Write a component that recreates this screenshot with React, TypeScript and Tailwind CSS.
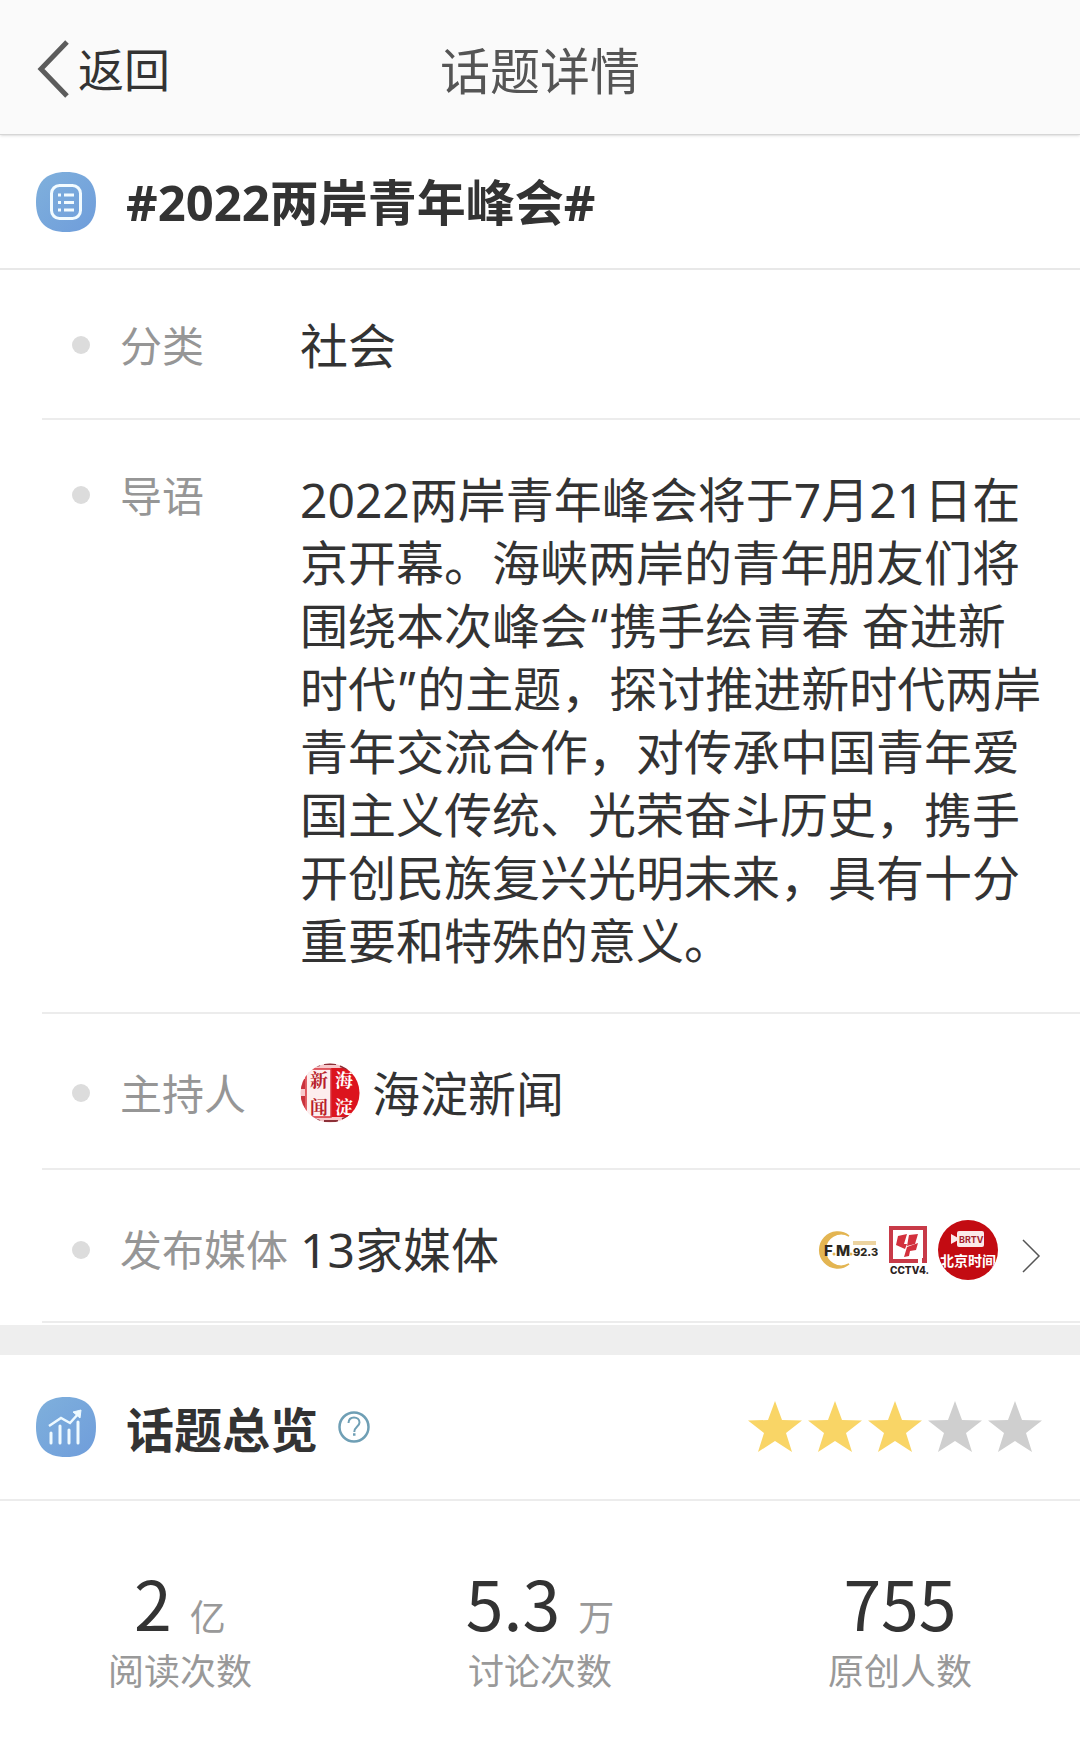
import type { ReactNode } from "react";

const CJK = "font-['Noto_Sans_CJK_SC',sans-serif]";

function BackChevron() {
  return (
    <svg viewBox="0 0 34 58" className="h-[58px] w-[34px]" fill="none" aria-hidden="true">
      <path d="M31 2 5 29l26 27" stroke="#5c5c5c" strokeWidth="5" />
    </svg>
  );
}

function Squircle({ id, children }: { id: string; children: ReactNode }) {
  return (
    <svg viewBox="0 0 60 60" className="size-[60px] shrink-0" fill="none" aria-hidden="true">
      <defs>
        <linearGradient id={id} x1="0" y1="0" x2="1" y2="1">
          <stop offset="0" stopColor="#7fb0dc" />
          <stop offset="1" stopColor="#6f9ddb" />
        </linearGradient>
      </defs>
      <path d="M30 0C50 0 60 10 60 30S50 60 30 60 0 50 0 30 10 0 30 0Z" fill={`url(#${id})`} />
      {children}
    </svg>
  );
}

function ListIcon() {
  return (
    <Squircle id="list-fill">
      <rect x="15.500" y="13.500" width="29" height="33" rx="8" stroke="#f2fbff" strokeWidth="3" />
      <path d="M28 23h10M28 30.500h10M28 38h10" stroke="#f2fbff" strokeWidth="3" />
      <path d="M22 23h3M22 30.500h3M22 38h3" stroke="#f2fbff" strokeWidth="3" />
    </Squircle>
  );
}

function TrendIcon() {
  return (
    <Squircle id="trend-fill">
      <path d="M15 46V36M24 46V29M33 46V33M42 46V25" stroke="#eefaff" strokeWidth="3" strokeLinecap="round" />
      <path d="m13 29 12-8 9 5 9-10" stroke="#eefaff" strokeWidth="2.500" />
      <path d="m37 15 8-2-1 8Z" fill="#eefaff" stroke="#eefaff" />
    </Squircle>
  );
}

function HelpIcon() {
  return (
    <svg viewBox="0 0 32 32" className="size-8" fill="none" stroke="#6f9fb5" aria-hidden="true">
      <circle cx="16" cy="16" r="14.500" strokeWidth="2.500" />
      <path d="M10.500 12c.2-3.600 2.500-5.500 5.500-5.500s5.500 2 5.500 5c0 4-5.200 4.200-5.200 9.500" strokeWidth="2" />
      <path d="M15 23.500h2.500" strokeWidth="2.500" />
    </svg>
  );
}

function HostAvatar() {
  return (
    <svg viewBox="0 0 60 60" className="size-[60px] shrink-0" role="img" aria-label="海淀新闻">
      <defs>
        <clipPath id="host-clip">
          <circle cx="30" cy="30" r="29.500" />
        </clipPath>
      </defs>
      <g clipPath="url(#host-clip)" fontFamily="'Noto Serif CJK SC','Noto Sans CJK SC',serif" fontWeight="700" fontSize="18">
        <path d="M0 0h60v60H0Z" fill="#f7c9cc" />
        <path d="M31 5h29v49H31Z" fill="#dc141e" />
        <path d="M6 6h25v48H6Z" fill="#fdeeee" stroke="#d8303a" strokeWidth="1.500" />
        <path d="M1 16h4v10H1ZM1 33h4v12H1Z" fill="#c8323c" />
        <path d="M12 4 20 2M24 1h12M40 3l8 3M14 56l6 2M24 58h14M42 56l6-2" stroke="#8d3038" strokeWidth="2" />
        <text x="10" y="24" fill="#b81f2b">新</text>
        <text x="10" y="51" fill="#b81f2b">闻</text>
        <text x="35" y="24" fill="#fff">海</text>
        <text x="35" y="51" fill="#fff">淀</text>
      </g>
    </svg>
  );
}

function FmLogo() {
  return (
    <svg viewBox="0 0 60 60" className="size-[60px]" role="img" aria-label="FM 92.3">
      <path d="M31 16A18 18 0 1 0 31 44 16 16 0 1 1 31 16Z" fill="#e3b552" stroke="#e3b552" strokeWidth="1.500" />
      <path d="M35 21h23v4H35Z" fill="#ecd3a0" />
      <g fontFamily="Inter,sans-serif" fontWeight="800" fill="#2d2820">
        <text x="6" y="36" fontSize="15">F</text>
        <text x="18" y="36" fontSize="15">M</text>
        <text x="35" y="36" fontSize="11">92.3</text>
      </g>
      <circle cx="16" cy="34" r="1.500" fill="#e3b552" />
      <circle cx="33" cy="34" r="1.500" fill="#e3b552" />
    </svg>
  );
}

function CctvLogo() {
  return (
    <svg viewBox="0 0 60 60" className="size-[60px]" role="img" aria-label="CCTV4">
      <path d="M13 8h34v33H13Z" fill="#fff" stroke="#c83a48" strokeWidth="4" />
      <path d="m20 16 9-2-3 10h3l-2 5-9-4Z" fill="#d3303c" />
      <path d="m31 15 9-1-3 10-8 2Z" fill="#d3303c" />
      <path d="m29 27 11-4-2 7-6 1-1 5-5 1Z" fill="#d3303c" />
      <path d="M40 39h9v5h-9Z" fill="#fff" />
      <path d="M44 38h5v5h-5Z" fill="#c83a48" />
      <text x="12" y="54" fontFamily="Inter,sans-serif" fontWeight="800" fontSize="10" fill="#2a2020">
        CCTV4.
      </text>
    </svg>
  );
}

function BrtvLogo() {
  return (
    <svg viewBox="0 0 60 60" className="size-[60px]" role="img" aria-label="北京时间">
      <defs>
        <clipPath id="brtv-clip">
          <circle cx="30" cy="30" r="30" />
        </clipPath>
      </defs>
      <g clipPath="url(#brtv-clip)">
        <path d="M0 0h60v60H0Z" fill="#c30b12" />
        <rect x="19" y="11" width="27" height="16" rx="2" fill="#fbe9e9" />
        <path d="m13 14 9 5-9 5Z" fill="#fbe9e9" />
        <text x="21" y="23" fontFamily="Inter,sans-serif" fontWeight="700" fontSize="9" fill="#a3232b">
          BRTV
        </text>
        <text x="2" y="46" fontFamily="'Noto Sans CJK SC',sans-serif" fontWeight="700" fontSize="14" fill="#fff">
          北京时间
        </text>
      </g>
    </svg>
  );
}

function Star({ filled }: { filled: boolean }) {
  return (
    <svg viewBox="0 0 54 52" className="h-[52px] w-[54px]" fill={filled ? "#f9d566" : "#cfcfcf"} aria-hidden="true">
      <path d="m27 0 7 19 20 .5-16 12.500L44 51 27 40 10 51l6-19L0 19.500 20 19Z" />
    </svg>
  );
}

function Row({ label, children, className = "items-center" }: { label: string; children: ReactNode; className?: string }) {
  return (
    <div className={`ml-[42px] flex border-b-2 border-[#ececec] pr-[38px] pl-[30px] ${className}`}>
      <dt className="flex h-[54px] w-[228px] shrink-0 items-center gap-[30px] text-[42px] whitespace-nowrap text-[#969696]">
        <span className="size-[18px] shrink-0 rounded-full bg-[#dcdcdc]" />
        {label}
      </dt>
      <dd className="flex min-w-0 flex-1 items-center text-[48px] leading-[63px] text-[#333]">{children}</dd>
    </div>
  );
}

function Quote({ children }: { children: string }) {
  return <span className="font-[Inter,sans-serif] leading-none">{children}</span>;
}

const stats = [
  { value: "2", unit: "亿", label: "阅读次数" },
  { value: "5.3", unit: "万", label: "讨论次数" },
  { value: "755", unit: "", label: "原创人数" },
];

export default function App() {
  return (
    <div className="min-h-screen bg-white font-['Noto_Sans','Noto_Sans_CJK_SC',sans-serif] text-[#333]" lang="zh-CN">
      <header className="relative z-10 grid h-[135px] grid-cols-[1fr_auto_1fr] items-center border-b border-[#d6d6d6] bg-[#fafafa] px-9 pt-1 shadow-sm">
        <button type="button" className="flex cursor-pointer items-center gap-2 justify-self-start text-[46px] leading-[60px]">
          <BackChevron />
          返回
        </button>
        <h1 className="pt-1 text-[50px] leading-[60px] text-[#555]">话题详情</h1>
      </header>

      <main>
        <section>
          <div className="flex h-[135px] items-center gap-[30px] border-b-2 border-[#e8e8e8] px-9">
            <ListIcon />
            <h2 className="text-[49px] leading-[60px] font-bold">#2022两岸青年峰会#</h2>
          </div>
          <dl>
            <Row label="分类" className="h-[150px] items-center pt-0.5">
              社会
            </Row>
            <Row label="导语" className="items-start pt-12 pb-10">
              <p>
                2022两岸青年峰会将于7月21日在京开幕。海峡两岸的青年朋友们将围绕本次峰会<Quote>“</Quote>携手绘青春
                奋进新时代<Quote>”</Quote>的主题，探讨推进新时代两岸青年交流合作，对传承中国青年爱国主义传统、光荣奋斗历史，携手开创民族复兴光明未来，具有十分重要和特殊的意义。
              </p>
            </Row>
            <Row label="主持人" className="h-[156px] items-center pt-1">
              <span className="flex items-center gap-3">
                <HostAvatar />
                海淀新闻
              </span>
            </Row>
            <Row label="发布媒体" className="h-[153px] items-center pt-2">
              <span className="flex-1">13家媒体</span>
              <a href="#media" className="flex items-center" aria-label="查看全部媒体">
                <FmLogo />
                <CctvLogo />
                <BrtvLogo />
                <svg viewBox="0 0 20 36" className="mt-3 ml-6 h-9 w-5" fill="none" stroke="#555" strokeWidth="1.500" aria-hidden="true">
                  <path d="m1 2 16 16L1 34" />
                </svg>
              </a>
            </Row>
          </dl>
        </section>

        <div className="mt-0.5 h-[30px] bg-[#eee]" />

        <section>
          <div className="flex h-[146px] items-center border-b-2 border-[#ececec] pr-[38px] pl-9">
            <TrendIcon />
            <h2 className={`${CJK} ml-[30px] text-[48px] leading-[60px] font-bold`}>话题总览</h2>
            <button type="button" aria-label="说明" className="ml-5 cursor-pointer">
              <HelpIcon />
            </button>
            <div className="ml-auto flex gap-1.5" role="img" aria-label="3 / 5">
              {[1, 2, 3, 4, 5].map((n) => (
                <Star key={n} filled={n <= 3} />
              ))}
            </div>
          </div>
          <div className="grid grid-cols-3 pt-14 pb-8">
            {stats.map((s) => (
              <div key={s.label} className={`${CJK} flex flex-col items-center`}>
                <p className="flex h-[90px] items-baseline gap-[18px] text-[68px] leading-[90px]">
                  {s.value}
                  {s.unit && <span className="text-[36px] leading-none text-[#999]">{s.unit}</span>}
                </p>
                <p className="text-[36px] leading-[44px] text-[#999]">{s.label}</p>
              </div>
            ))}
          </div>
        </section>
      </main>
    </div>
  );
}
